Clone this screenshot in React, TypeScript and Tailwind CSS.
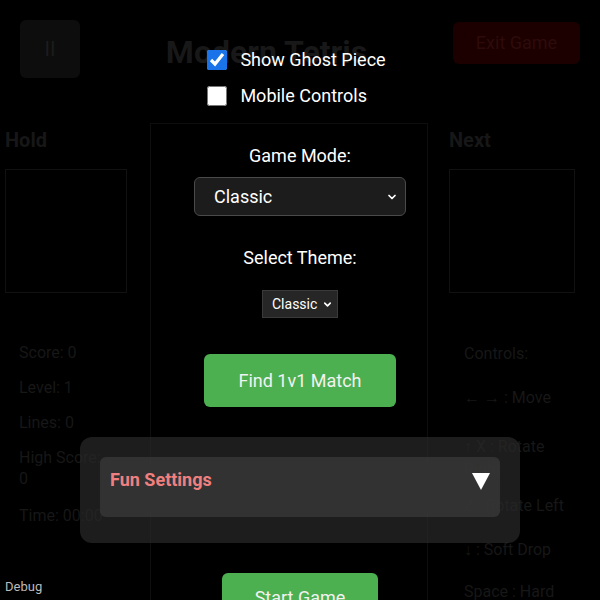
import React, { useState } from 'react';
import { ChevronDown } from 'lucide-react';

const dimText = 'text-[#171717]';

const App: React.FC = () => {
  const [ghost, setGhost] = useState<boolean>(true);
  const [mobile, setMobile] = useState<boolean>(false);

  return (
    <div className="relative w-[600px] h-[600px] overflow-hidden bg-black font-['Roboto',sans-serif]">
      {/* dimmed game behind the menu */}
      <div className="flex flex-col h-full">
        <div className="flex items-start justify-between px-5 pt-5 h-[110px] shrink-0">
          <div className="w-[60px] h-[58px] rounded-md bg-[#0d0d0d] flex items-center justify-center text-xl text-[#1c1c1c]">II</div>
          <h1 className="mt-[8px] text-[32px] font-bold text-[#181818]">Modern Tetris</h1>
          <div className="w-[127px] h-[42px] mt-[2px] rounded-md bg-[#1c0000] flex items-center justify-center text-lg text-[#2e0b0b]">Exit Game</div>
        </div>
        <div className="flex flex-1">
          <div className="w-[150px] pl-[5px] pt-[16px] shrink-0">
            <div className={`text-xl font-bold ${dimText}`}>Hold</div>
            <div className="mt-[15px] w-[122px] h-[124px] border border-[#111111]" />
            <div className={`mt-[49px] pl-[14px] w-[100px] text-base leading-[21px] ${dimText} flex flex-col gap-[14px]`}>
              <div>Score: 0</div>
              <div>Level: 1</div>
              <div>Lines: 0</div>
              <div>High Score: 0</div>
              <div className="mt-[2px]">Time: 00:00</div>
            </div>
          </div>
          <div className="w-[278px] shrink-0 border-l border-r border-t border-[#0e0e0e] mt-[13px]" />
          <div className="pl-[21px] pt-[16px]">
            <div className={`text-xl font-bold ${dimText}`}>Next</div>
            <div className="mt-[15px] w-[126px] h-[124px] border border-[#111111]" />
            <div className={`mt-[49px] pl-[15px] w-[125px] text-base leading-[23px] ${dimText} flex flex-col`}>
              <div>Controls:</div>
              <div className="mt-[21px]">← → : Move</div>
              <div className="mt-[26px]">↑ X : Rotate Right</div>
              <div className="mt-[13px]">Z : Rotate Left</div>
              <div className="mt-[21px]">↓ : Soft Drop</div>
              <div className="mt-[19px]">Space : Hard Drop</div>
            </div>
          </div>
        </div>
      </div>

      {/* start menu overlay */}
      <div className="absolute inset-0 flex flex-col items-center text-white">
        <div className="mt-[48px] shrink-0 flex flex-col gap-[12px] mr-[7px]">
          <label className="flex items-center gap-[13px] text-lg leading-6">
            <input
              type="checkbox"
              checked={ghost}
              onChange={() => setGhost(!ghost)}
              className="w-5 h-5 m-0 accent-[#1a73e8]"
            />
            Show Ghost Piece
          </label>
          <label className="flex items-center gap-[13px] text-lg leading-6">
            <input
              type="checkbox"
              checked={mobile}
              onChange={() => setMobile(!mobile)}
              className="w-5 h-5 m-0 accent-[#1a73e8]"
            />
            Mobile Controls
          </label>
        </div>

        <div className="mt-[36px] shrink-0 text-lg leading-6">Game Mode:</div>
        <div className="relative mt-[9px] shrink-0">
          <select className="appearance-none w-[212px] h-[39px] pl-[19px] rounded-md bg-[#1c1c1c] border border-[#4a4a4a] text-lg text-white outline-none">
            <option>Classic</option>
          </select>
          <ChevronDown size={12} strokeWidth={3.5} className="absolute right-[8px] top-[14px] pointer-events-none text-white" />
        </div>

        <div className="mt-[30px] shrink-0 text-lg leading-6">Select Theme:</div>
        <div className="relative mt-[20px] shrink-0">
          <select className="appearance-none w-[76px] h-[28px] pl-[9px] bg-[#262626] border border-[#3a3a3a] text-sm text-white outline-none">
            <option>Classic</option>
          </select>
          <ChevronDown size={11} strokeWidth={3.5} className="absolute right-[5px] top-[9px] pointer-events-none text-white" />
        </div>

        <button className="mt-[36px] shrink-0 w-[192px] h-[53px] rounded-md bg-[#4caf50] text-lg text-[#f2f2f2]">Find 1v1 Match</button>

        <div className="mt-[30px] shrink-0 w-[440px] h-[106px] rounded-xl bg-[#2a2a2a]/70 p-[20px]">
          <div className="h-[60px] rounded-md bg-[#3a3a3a]/75 flex items-start justify-between pl-[10px] pr-[10px] pt-[9px]">
            <span className="text-lg font-bold text-[#f08080]">Fun Settings</span>
            <span className="mt-[7px] w-0 h-0 border-l-[9px] border-r-[9px] border-t-[17px] border-l-transparent border-r-transparent border-t-white" />
          </div>
        </div>

        <button className="mt-[30px] w-[156px] h-[48px] shrink-0 rounded-md bg-[#4caf50] text-lg text-[#f2f2f2] flex items-start justify-center pt-[11px]">Start Game</button>
      </div>

      <div className="absolute left-[5px] bottom-[4px] text-[13px] text-[#bbbbbb]">Debug</div>
    </div>
  );
};

export default App;
